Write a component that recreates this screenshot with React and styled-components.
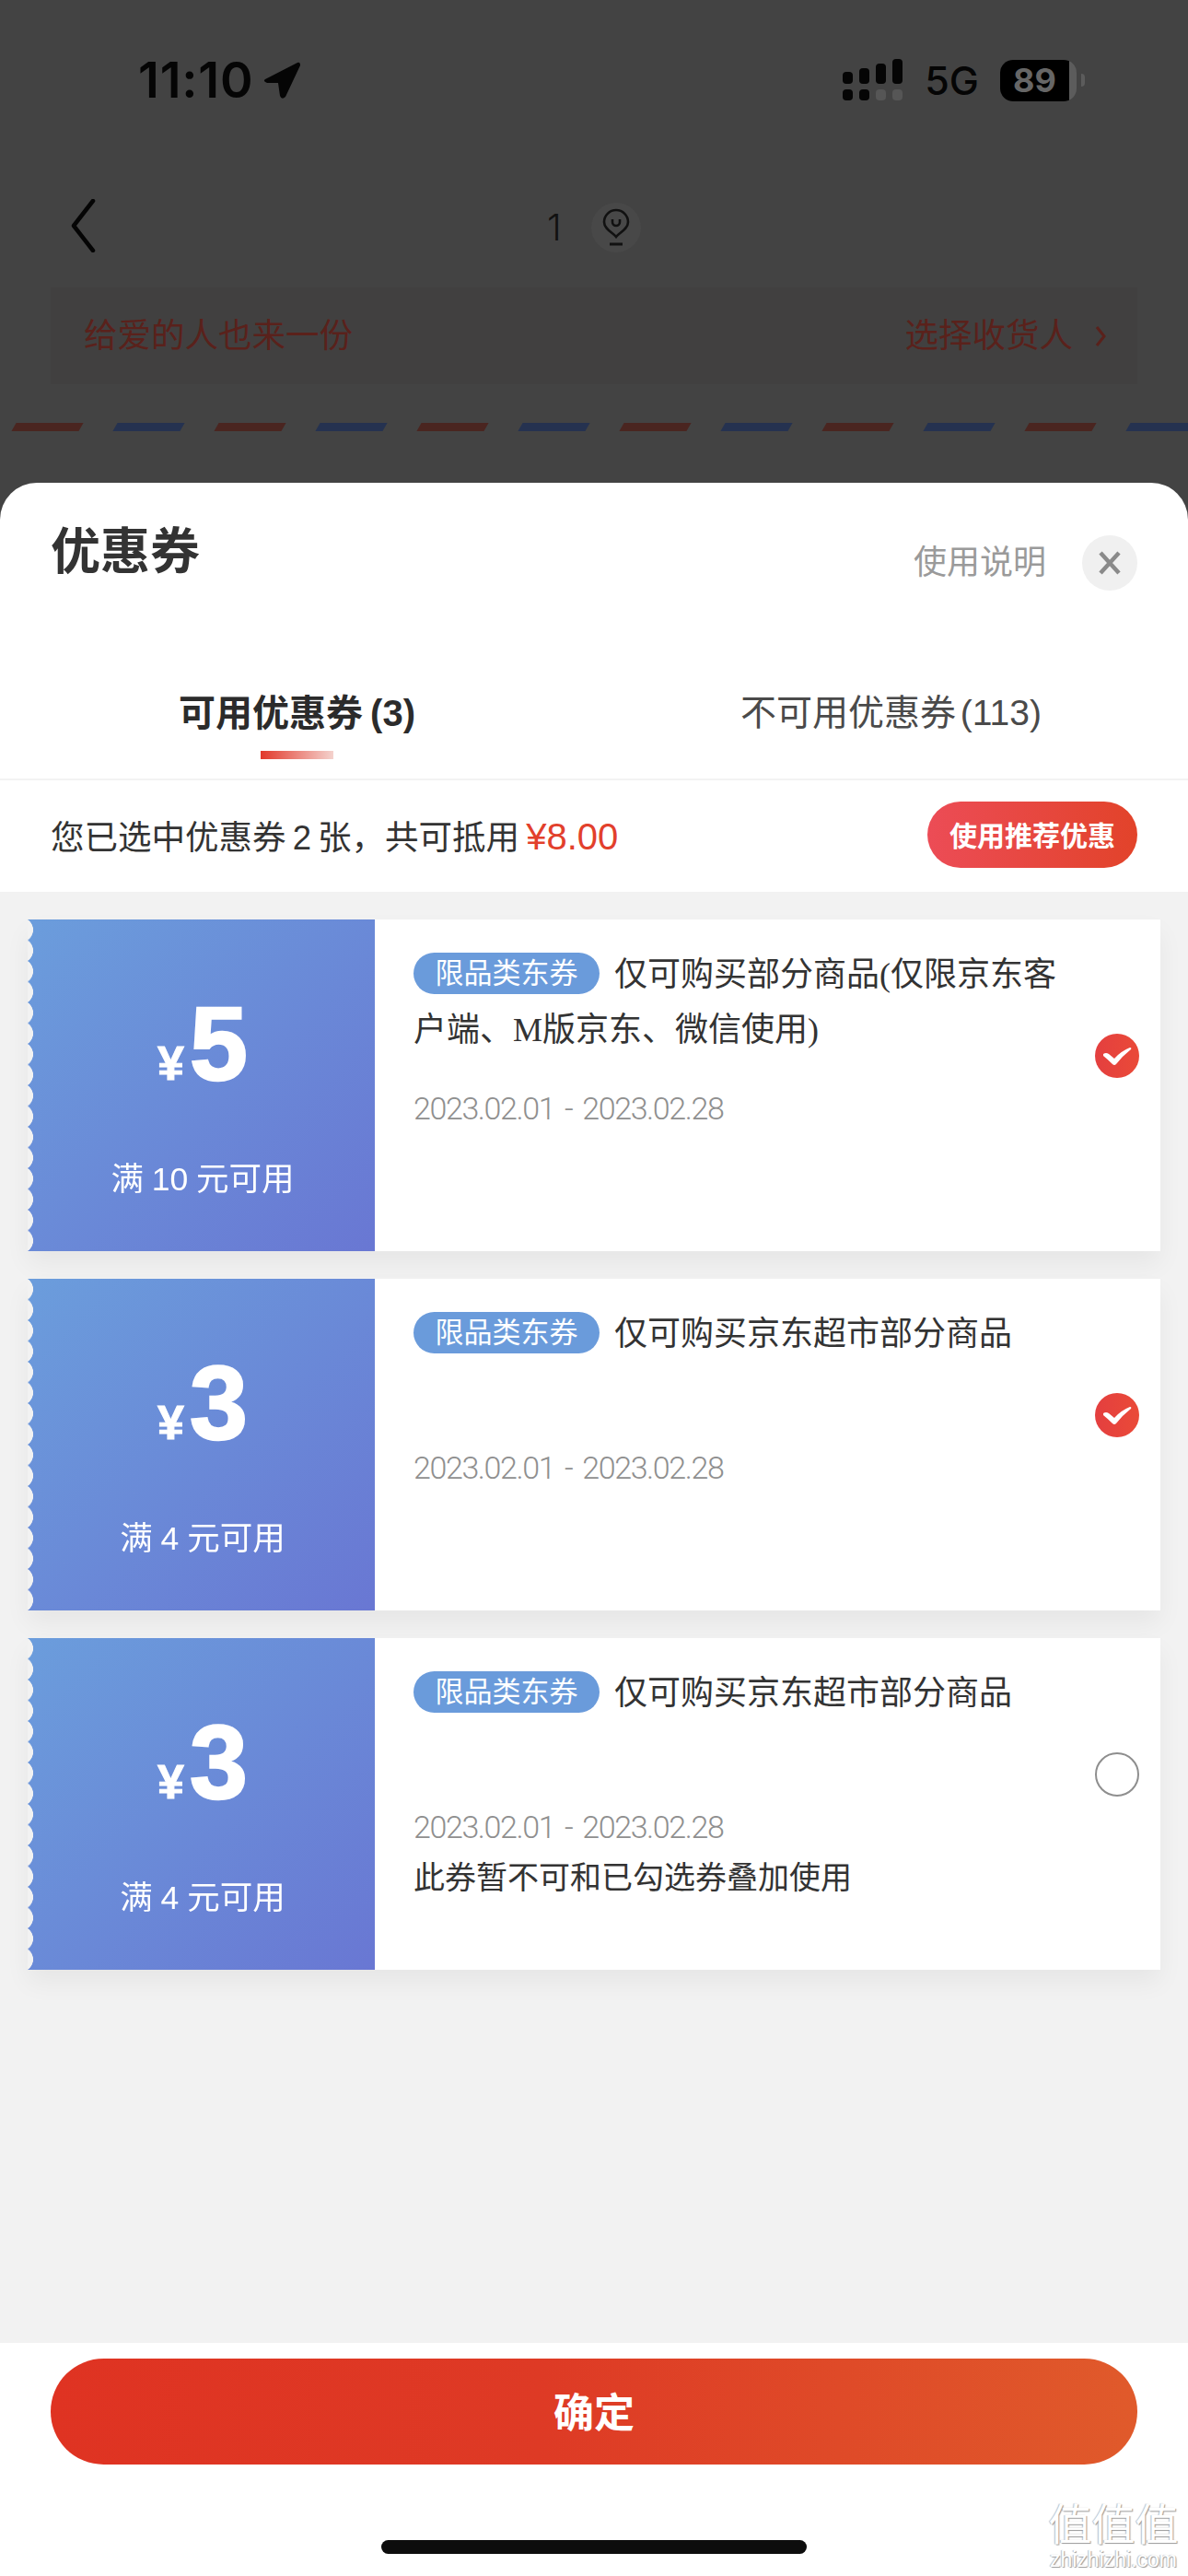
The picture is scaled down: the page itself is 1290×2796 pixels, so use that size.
import React from 'react';
import styled, { createGlobalStyle } from 'styled-components';

const SANS = `"Liberation Sans", "Noto Sans CJK SC", sans-serif`;
const SERIF_LATIN = `"Liberation Serif", "Noto Sans CJK SC", sans-serif`;

const GlobalStyle = createGlobalStyle`
  html, body {
    margin: 0;
    padding: 0;
    background: #434343;
  }
  * {
    box-sizing: border-box;
  }
`;

const Page = styled.div`
  position: relative;
  width: 1290px;
  height: 2796px;
  display: flex;
  flex-direction: column;
  overflow: hidden;
  font-family: ${SANS};
`;

const Backdrop = styled.div`
  height: 524px;
  flex: none;
  display: flex;
  flex-direction: column;
  background: #434343;
`;

const StatusBar = styled.div`
  height: 200px;
  padding: 64px 112px 0 150px;
  display: flex;
  justify-content: space-between;
  align-items: flex-start;
  color: #050505;
`;

const TimeGroup = styled.div`
  display: flex;
  align-items: center;
  gap: 10px;
  font-family: Inter, sans-serif;
  font-size: 54px;
  line-height: 46px;
  font-weight: 600;
  letter-spacing: 0.8px;
`;

const StatusRight = styled.div`
  display: flex;
  align-items: center;
  gap: 23px;
`;

const NetworkLabel = styled.span`
  font-family: Inter, sans-serif;
  font-size: 43px;
  line-height: 44px;
  font-weight: 500;
`;

const Battery = styled.div`
  display: flex;
  align-items: center;
  gap: 5px;
`;

const BatteryBody = styled.div`
  width: 83px;
  height: 45px;
  display: flex;
  border-radius: 14px;
  overflow: hidden;
  background: #5c5c5c;
`;

const BatteryFill = styled.div`
  width: 75px;
  background: #000;
  color: #666;
  font-family: Inter, sans-serif;
  font-size: 36px;
  line-height: 45px;
  font-weight: 700;
  text-align: center;
`;

const BatteryCap = styled.div`
  width: 4px;
  height: 14px;
  border-radius: 0 4px 4px 0;
  background: #5c5c5c;
`;

const NavBar = styled.div`
  height: 112px;
  padding: 16px 0 0 76px;
  display: flex;
  align-items: flex-start;
  position: relative;
`;

const NavCenter = styled.div`
  position: absolute;
  left: 594px;
  top: 20px;
  display: flex;
  align-items: center;
  gap: 32px;
`;

const NavCount = styled.span`
  font-family: Inter, sans-serif;
  font-size: 40px;
  line-height: 46px;
  font-weight: 300;
  color: #111;
`;

const NavIconBubble = styled.div`
  width: 54px;
  height: 54px;
  border-radius: 50%;
  background: #484848;
  display: flex;
  align-items: center;
  justify-content: center;
`;

const Banner = styled.div`
  margin: 0 55px;
  height: 105px;
  padding: 0 34px 0 36px;
  display: flex;
  align-items: center;
  justify-content: space-between;
  background: #414040;
  color: #5a211b;
  font-size: 36.5px;
  line-height: 44px;
`;

const BannerLink = styled.div`
  display: flex;
  align-items: center;
  gap: 24px;
`;

const AirMail = styled.div`
  margin-top: 42px;
  height: 9px;
  display: flex;
  gap: 37px;
  padding-left: 15px;
`;

const AirStripe = styled.div`
  flex: none;
  width: 73px;
  height: 9px;
  transform: skewX(-30deg);
  background: ${(p) => (p.$blue ? '#253250' : '#4a2520')};
`;

const Sheet = styled.div`
  flex: 1;
  min-height: 0;
  display: flex;
  flex-direction: column;
  background: #fff;
  border-radius: 40px 40px 0 0;
`;

const SheetHeader = styled.div`
  height: 180px;
  padding: 45px 55px 0;
  display: flex;
  justify-content: space-between;
  align-items: flex-start;
`;

const SheetTitle = styled.h2`
  margin: 0;
  font-size: 54px;
  line-height: 60px;
  font-weight: 700;
  color: #333;
`;

const HeaderActions = styled.div`
  display: flex;
  align-items: center;
  gap: 39px;
  margin-top: 12px;
`;

const HelpLink = styled.span`
  font-size: 36px;
  line-height: 60px;
  color: #9a9a9a;
`;

const CloseButton = styled.div`
  width: 60px;
  height: 60px;
  border-radius: 50%;
  background: #f0f0f0;
  display: flex;
  align-items: center;
  justify-content: center;
`;

const Tabs = styled.div`
  height: 143px;
  display: flex;
  border-bottom: 2px solid #f3f3f3;
`;

const Tab = styled.div`
  width: 50%;
  padding-top: 44px;
  display: flex;
  flex-direction: column;
  align-items: center;
  font-size: ${(p) => (p.$active ? '40px' : '39px')};
  word-spacing: ${(p) => (p.$active ? '-3px' : '-6px')};
  line-height: 52px;
  font-weight: ${(p) => (p.$active ? 700 : 400)};
  color: ${(p) => (p.$active ? '#2b2b2b' : '#4a4a4a')};
`;

const TabMark = styled.div`
  width: 79px;
  height: 9px;
  margin-top: 15px;
  background: linear-gradient(90deg, #e2392b, #f4d2cd);
`;

const Summary = styled.div`
  height: 121px;
  padding: 0 55px 3px;
  display: flex;
  align-items: center;
  justify-content: space-between;
  font-size: 36.5px;
  word-spacing: -3px;
  color: #333;
`;

const Price = styled.span`
  font-size: 40px;
  color: #e2402c;
`;

const RecommendButton = styled.div`
  width: 228px;
  height: 72px;
  padding-bottom: 2px;
  border-radius: 36px;
  background: linear-gradient(90deg, #ec4c56, #e2432a);
  color: #fff;
  font-size: 30px;
  font-weight: 700;
  display: flex;
  align-items: center;
  justify-content: center;
`;

const CouponList = styled.div`
  flex: 1;
  min-height: 0;
  padding: 30px 30px 0;
  display: flex;
  flex-direction: column;
  gap: 30px;
  background: #f2f2f2;
`;

const Coupon = styled.div`
  height: 360px;
  display: flex;
  box-shadow: 0 14px 26px rgba(0, 0, 0, 0.05);
`;

const CouponValue = styled.div`
  width: 377px;
  flex: none;
  padding: 0 3px 0 6px;
  display: flex;
  flex-direction: column;
  align-items: center;
  background: linear-gradient(135deg, #6b9ddc, #6977d3);
  -webkit-mask: radial-gradient(circle at -7.5px 50%, transparent 13.2px, #000 13.7px) 0 0 / 100% 22.5px repeat-y;
  mask: radial-gradient(circle at -7.5px 50%, transparent 13.2px, #000 13.7px) 0 0 / 100% 22.5px repeat-y;
  color: #fff;
`;

const Amount = styled.div`
  margin-top: 70px;
  height: 130px;
  display: flex;
  align-items: baseline;
  gap: 6px;
  font-weight: 700;
  font-size: 113px;
  line-height: 130px;
  -webkit-text-stroke: 2.5px #fff;
`;

const Yen = styled.span`
  font-size: 52px;
  -webkit-text-stroke: 1px #fff;
`;

const Threshold = styled.div`
  margin-top: 57px;
  font-size: 35.5px;
  word-spacing: -1px;
  line-height: 50px;
`;

const CouponBody = styled.div`
  flex: 1;
  min-width: 0;
  padding: 30px 0 0 42px;
  display: flex;
  align-items: flex-start;
  background: #fff;
`;

const CouponInfo = styled.div`
  width: 710px;
  flex: none;
`;

const CouponTitle = styled.div`
  height: 120px;
  font-family: ${SERIF_LATIN};
  font-size: 36px;
  line-height: 60px;
  color: #333;
`;

const ScopeTag = styled.span`
  display: inline-block;
  height: 45px;
  width: 202px;
  margin-right: 16px;
  border-radius: 23px;
  background: #6a9bdb;
  color: #fff;
  font-family: ${SANS};
  font-size: 31px;
  line-height: 45px;
  text-align: center;
  vertical-align: 3px;
`;

const ValidDate = styled.div`
  margin-top: 29px;
  font-family: Roboto, sans-serif;
  font-size: 34px;
  font-weight: 300;
  letter-spacing: -1.4px;
  word-spacing: 4px;
  line-height: 52px;
  color: #8f8f8f;
`;

const CouponNote = styled.div`
  margin-top: 4px;
  font-size: 34px;
  line-height: 50px;
  color: #333;
`;

const CheckSlot = styled.div`
  margin: 94px 0 0 30px;
  width: 48px;
  height: 48px;
  flex: none;
`;

const CheckOff = styled.div`
  width: 48px;
  height: 48px;
  border-radius: 50%;
  border: 2px solid #8e8e8e;
  background: #fff;
`;

const Footer = styled.div`
  height: 253px;
  flex: none;
  padding: 17px 55px 0;
  display: flex;
  flex-direction: column;
  align-items: center;
  background: #fff;
`;

const ConfirmButton = styled.div`
  width: 100%;
  height: 115px;
  padding-bottom: 3px;
  border-radius: 58px;
  background: linear-gradient(90deg, #df3322 0%, #de3a25 45%, #e05a2b 100%);
  color: #fff;
  font-size: 44px;
  font-weight: 700;
  display: flex;
  align-items: center;
  justify-content: center;
`;

const HomeIndicator = styled.div`
  width: 462px;
  height: 15px;
  margin-top: 82px;
  border-radius: 8px;
  background: #0d0d0d;
`;

const Watermark = styled.div`
  position: absolute;
  right: 9px;
  bottom: 5px;
  width: 144px;
  text-align: center;
  color: #fff;
  text-shadow: 1px 1px 1px #999, -1px 0 1px #bbb;
`;

const WatermarkMark = styled.div`
  font-size: 47px;
  line-height: 50px;
`;

const WatermarkUrl = styled.div`
  font-size: 23px;
  line-height: 25px;
`;

const ArrowIcon = () => (
  <svg width="42" height="42" viewBox="0 0 42 42">
    <path
      d="M3 20 L38 2 Q41 1 41 5 L25 39 Q21 43 19 38 L17 24 L5 24 Q0 22 3 20 Z"
      fill="#050505"
    />
  </svg>
);

const SignalIcon = () => (
  <svg width="66" height="46" viewBox="0 0 66 46" fill="#050505">
    <rect x="0" y="14" width="11" height="13" rx="4" />
    <rect x="18" y="10" width="11" height="17" rx="4" />
    <rect x="36" y="5" width="11" height="22" rx="4" />
    <rect x="54" y="0" width="11" height="27" rx="4" />
    <rect x="0" y="33" width="11" height="12" rx="4" />
    <rect x="18" y="33" width="11" height="12" rx="4" />
    <rect x="36" y="33" width="11" height="12" rx="4" fill="#565656" />
    <rect x="54" y="33" width="11" height="12" rx="4" fill="#565656" />
  </svg>
);

const BackIcon = () => (
  <svg width="28" height="58" viewBox="0 0 28 58" fill="none">
    <path d="M25 2 L4 29 L25 56" stroke="#050505" strokeWidth="4.5" strokeLinecap="round" strokeLinejoin="round" />
  </svg>
);

const PinIcon = () => (
  <svg width="30" height="42" viewBox="0 0 30 42" fill="none" stroke="#111" strokeWidth="2.6">
    <path d="M15 31 C12 27 2 23 2 15 A13 13 0 0 1 28 15 C28 23 18 27 15 31 Z" />
    <path d="M11 12 V15 A4 4 0 0 0 19 15 V12" />
    <path d="M8 39 H22" strokeWidth="3" />
  </svg>
);

const SmallChevron = () => (
  <svg width="12" height="24" viewBox="0 0 12 24" fill="none">
    <path d="M2 2 L10 12 L2 22" stroke="#5a211b" strokeWidth="3" />
  </svg>
);

const CloseIcon = () => (
  <svg width="30" height="30" viewBox="0 0 30 30" fill="none">
    <path d="M5 4 L25 26 M25 4 L5 26" stroke="#8a8a8a" strokeWidth="4.5" />
  </svg>
);

const CheckOn = () => (
  <svg width="48" height="48" viewBox="0 0 48 48">
    <defs>
      <linearGradient id="checkFill" x1="0" y1="0" x2="1" y2="0">
        <stop offset="0" stopColor="#e43f3f" />
        <stop offset="1" stopColor="#ea4a38" />
      </linearGradient>
    </defs>
    <circle cx="24" cy="24" r="24" fill="url(#checkFill)" />
    <path
      d="M9 22 Q12 20 15 22 L21 27 Q28 19 38 15 Q40 15 39 17 Q30 24 23 33 Q21 35 19 33 Q14 28 9 24 Z"
      fill="#fff"
    />
  </svg>
);

const coupons = [
  {
    amount: '5',
    threshold: '满 10 元可用',
    title: '仅可购买部分商品(仅限京东客户端、M版京东、微信使用)',
    checked: true,
  },
  { amount: '3', threshold: '满 4 元可用', title: '仅可购买京东超市部分商品', checked: true },
  {
    amount: '3',
    threshold: '满 4 元可用',
    title: '仅可购买京东超市部分商品',
    checked: false,
    note: '此券暂不可和已勾选券叠加使用',
  },
];

const stripes = Array.from({ length: 12 }, (_, i) => i % 2 === 1);

const App = () => {
  return (
    <Page>
      <GlobalStyle />
      <Backdrop>
        <StatusBar>
          <TimeGroup>
            11:10
            <ArrowIcon />
          </TimeGroup>
          <StatusRight>
            <SignalIcon />
            <NetworkLabel>5G</NetworkLabel>
            <Battery>
              <BatteryBody>
                <BatteryFill>89</BatteryFill>
              </BatteryBody>
              <BatteryCap />
            </Battery>
          </StatusRight>
        </StatusBar>
        <NavBar>
          <BackIcon />
          <NavCenter>
            <NavCount>1</NavCount>
            <NavIconBubble>
              <PinIcon />
            </NavIconBubble>
          </NavCenter>
        </NavBar>
        <Banner>
          <span>给爱的人也来一份</span>
          <BannerLink>
            选择收货人
            <SmallChevron />
          </BannerLink>
        </Banner>
        <AirMail>
          {stripes.map((blue, i) => (
            <AirStripe key={i} $blue={blue} />
          ))}
        </AirMail>
      </Backdrop>

      <Sheet>
        <SheetHeader>
          <SheetTitle>优惠券</SheetTitle>
          <HeaderActions>
            <HelpLink>使用说明</HelpLink>
            <CloseButton>
              <CloseIcon />
            </CloseButton>
          </HeaderActions>
        </SheetHeader>
        <Tabs>
          <Tab $active>
            可用优惠券 (3)
            <TabMark />
          </Tab>
          <Tab>不可用优惠券 (113)</Tab>
        </Tabs>
        <Summary>
          <span>
            您已选中优惠券 2 张，共可抵用 <Price>¥8.00</Price>
          </span>
          <RecommendButton>使用推荐优惠</RecommendButton>
        </Summary>
        <CouponList>
          {coupons.map((c, i) => (
            <Coupon key={i}>
              <CouponValue>
                <Amount>
                  <Yen>¥</Yen>
                  {c.amount}
                </Amount>
                <Threshold>{c.threshold}</Threshold>
              </CouponValue>
              <CouponBody>
                <CouponInfo>
                  <CouponTitle>
                    <ScopeTag>限品类东券</ScopeTag>
                    {c.title}
                  </CouponTitle>
                  <ValidDate>2023.02.01 - 2023.02.28</ValidDate>
                  {c.note && <CouponNote>{c.note}</CouponNote>}
                </CouponInfo>
                <CheckSlot>{c.checked ? <CheckOn /> : <CheckOff />}</CheckSlot>
              </CouponBody>
            </Coupon>
          ))}
        </CouponList>
        <Footer>
          <ConfirmButton>确定</ConfirmButton>
          <HomeIndicator />
        </Footer>
      </Sheet>

      <Watermark>
        <WatermarkMark>值值值</WatermarkMark>
        <WatermarkUrl>zhizhizhi.com</WatermarkUrl>
      </Watermark>
    </Page>
  );
};

export default App;
